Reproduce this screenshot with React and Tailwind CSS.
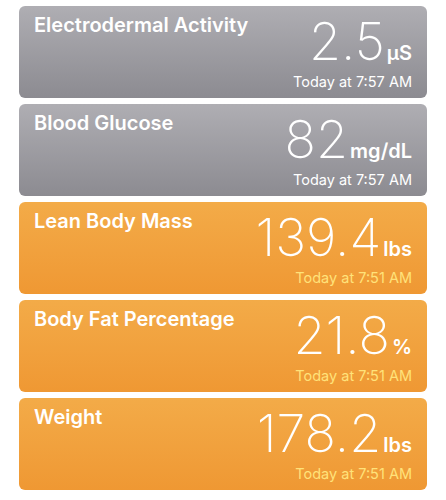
const readings = [
    { title: "Electrodermal Activity", value: "2.5", unit: "µS", time: "Today at 7:57 AM", tone: "gray" },
    { title: "Blood Glucose", value: "82", unit: "mg/dL", time: "Today at 7:57 AM", tone: "gray" },
    { title: "Lean Body Mass", value: "139.4", unit: "lbs", time: "Today at 7:51 AM", tone: "orange" },
    { title: "Body Fat Percentage", value: "21.8", unit: "%", time: "Today at 7:51 AM", tone: "orange" },
    { title: "Weight", value: "178.2", unit: "lbs", time: "Today at 7:51 AM", tone: "orange" },
];

const ReadingCard = ({ reading }) => {
    const isGray = reading.tone === "gray";
    return (
        <div
            className={`h-[92px] rounded-[6px] flex justify-between pl-[15px] pr-[15px] pt-[7px] ${
                isGray
                    ? "bg-gradient-to-b from-[#afaeb3] to-[#8c8b91]"
                    : "bg-gradient-to-b from-[#f3ab48] to-[#ef9833]"
            }`}
        >
            <h2 className="text-white font-semibold text-[20px] leading-[24px]">{reading.title}</h2>
            <div className="flex flex-col items-end">
                <div className="flex items-baseline text-white leading-none mt-[3px]">
                    <span className="font-extralight text-[52px]">{reading.value}</span>
                    <span className="font-semibold text-[20px] ml-[2px]">{reading.unit}</span>
                </div>
                <p className={`text-[14.5px] leading-[18px] mt-[5px] ${isGray ? "text-white" : "text-[#ffe27a]"}`}>
                    {reading.time}
                </p>
            </div>
        </div>
    );
};

const App = () => {
    return (
        <div className="w-[446px] h-[500px] bg-white px-[19px] pt-[6px] flex flex-col gap-[6px] font-['Inter',sans-serif]">
            {readings.map((r) => (
                <ReadingCard key={r.title} reading={r} />
            ))}
        </div>
    );
};

export default App;
